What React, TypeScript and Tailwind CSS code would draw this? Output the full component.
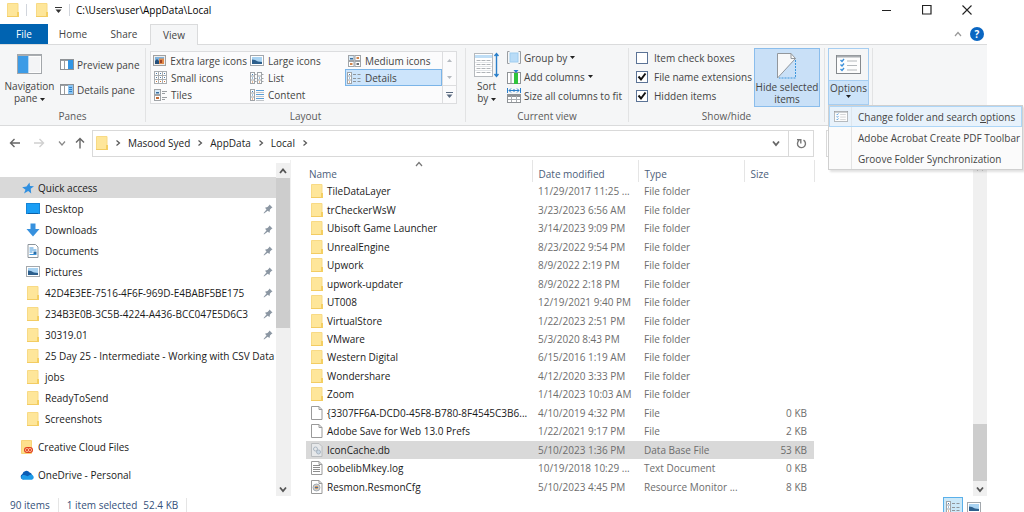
import { useState } from "react";
import type { ReactNode } from "react";

// ─── Types ────────────────────────────────────────────────
type FileKind = "folder" | "file" | "db" | "log" | "cfg";

interface FileRow {
  name: string;
  date: string;
  type: string;
  size?: string;
  kind: FileKind;
}

interface SideItem {
  label: string;
  icon: ReactNode;
  pinned?: boolean;
}

// ─── Icons ────────────────────────────────────────────────
function FolderIcon() {
  return (
    <svg width="12" height="14" viewBox="0 0 12 14" className="shrink-0">
      <path d="M.5.5h10.500v13H.5z" fill="#fee69a" stroke="#f8da85" />
      <path d="M10 9h2v5h-2z" fill="#f4cf62" />
      <path d="M0 13.500h11" stroke="#f3cc62" />
    </svg>
  );
}

function CreativeCloudIcon() {
  return (
    <svg width="14" height="14" viewBox="0 0 14 14" className="shrink-0">
      <path d="M1.500.5h10v13h-10z" fill="#fee08c" stroke="#f8d479" />
      <rect x="4" y="7" width="9" height="6" rx="3" fill="#e0411c" />
      <circle cx="7" cy="10" r="1.600" fill="none" stroke="#ffc9a8" strokeWidth=".8" />
      <circle cx="10" cy="10" r="1.600" fill="none" stroke="#ffc9a8" strokeWidth=".8" />
    </svg>
  );
}

function OneDriveIcon() {
  return (
    <svg width="14" height="10" viewBox="0 0 14 10" className="shrink-0">
      <path d="M3 9.500A2.900 2.900 0 0 1 2.400 4 4 4 0 0 1 9.600 2.600 3.200 3.200 0 0 1 12 5z" fill="#0a5cb5" />
      <path d="M3.200 9.700a2.400 2.400 0 0 1-.8-4.400c2-1 4 .2 5.200 1L10 4.800a2.500 2.500 0 0 1 2 4.900z" fill="#1e9be8" />
    </svg>
  );
}

function StarIcon() {
  return (
    <svg width="12" height="12" viewBox="0 0 12 12" className="shrink-0">
      <path d="M7.500.5 8 4l4 .3-3.300 2.500.5 4.700-3-2.500L2 11.500 3.500 7.700.2 5.300l4.300-.8z" fill="#2f8fe0" />
    </svg>
  );
}

function DesktopIcon() {
  return (
    <svg width="14" height="12" viewBox="0 0 14 12" className="shrink-0">
      <rect x=".5" y=".5" width="13" height="10" fill="#1a9ef5" stroke="#1484d6" />
      <path d="M2 10.500h10" stroke="#0b5fa5" />
    </svg>
  );
}

function DownloadIcon() {
  return (
    <svg width="14" height="14" viewBox="0 0 14 14" className="shrink-0">
      <path d="M4.500.5h5V6H13.500L7 13.500.500 6h4z" fill="#3791de" />
    </svg>
  );
}

function DocumentIcon() {
  return (
    <svg width="12" height="14" viewBox="0 0 12 14" className="shrink-0">
      <path d="M1 .5h7.500L11 3v10.500H1z" fill="#fff" stroke="#8d959c" />
      <path d="M2.500 4h4M2.500 6h7M2.500 8h3M2.500 10.500h7" stroke="#3f94d8" />
      <path d="M6.500 7.500h3V10h-3z" fill="#2a6ea8" />
    </svg>
  );
}

function PictureIcon() {
  return (
    <svg width="14" height="11" viewBox="0 0 14 11" className="shrink-0">
      <rect x=".5" y=".5" width="13" height="10" fill="#fff" stroke="#a3a8ad" />
      <rect x="2" y="2" width="10" height="7" fill="#a9d3f2" />
      <path d="M2 4.500l3 .5 3 1.500 4 .5v2H2z" fill="#2d5f8c" />
    </svg>
  );
}

function PinIcon() {
  return (
    <svg width="10" height="10" viewBox="0 0 10 10" className="shrink-0">
      <path d="M6.500.5 9.500 3.500 8.500 4 7 5.500 6.500 8 4.700 6.700 1 9.500.600 9 3.500 5.500 2 3.800 4.500 3 6 1.500z" fill="#8c97a3" />
    </svg>
  );
}

function FileIcon({ kind }: { kind: FileKind }) {
  if (kind === "folder") return <FolderIcon />;
  return (
    <svg width="12" height="14" viewBox="0 0 12 14" className="shrink-0">
      <path d="M.5.5H8L11 3.500v10H.5z" fill={kind === "db" ? "#e6e8ea" : "#fff"} stroke={kind === "db" ? "#b9bcbf" : "#9a9a9a"} />
      {kind !== "db" && <path d="M8 .5v3h3" fill="none" stroke="#9a9a9a" />}
      {kind === "log" && <path d="M2 4.500h7M2 6.500h7M2 8.500h7M2 10.500h7" stroke="#8d8d8d" />}
      {kind === "db" && (
        <g fill="none" stroke="#aab6c2">
          <circle cx="4.500" cy="6" r="2" />
          <circle cx="7.500" cy="9" r="2" fill="#c9d7e4" />
        </g>
      )}
      {kind === "cfg" && (
        <g>
          <circle cx="5.500" cy="7.500" r="3.500" fill="#cdd1d5" stroke="#979ea5" strokeWidth=".8" />
          <circle cx="5.500" cy="7.500" r="1.800" fill="#d99a5b" />
          <path d="M4 7.500h3" stroke="#4a6f9c" />
        </g>
      )}
    </svg>
  );
}

function NavPaneIcon() {
  return (
    <svg width="25" height="20" viewBox="0 0 25 20">
      <rect x=".5" y=".5" width="24" height="19" fill="#fdfdfd" stroke="#a3a7ab" />
      <path d="M1 1.500h23" stroke="#a9adb1" />
      <rect x="1" y="2" width="10" height="17" fill="#3c9be6" />
      <rect x="11" y="2" width="1" height="17" fill="#b5d8f5" />
      <rect x="12" y="3" width="11" height="15" fill="#f3f4f6" />
    </svg>
  );
}

function PaneIcon({ details }: { details?: boolean }) {
  return (
    <svg width="14" height="11" viewBox="0 0 14 11" className="shrink-0">
      <rect x=".5" y=".5" width="13" height="10" fill="#fff" stroke="#8e9296" />
      <path d="M1 1.500h12M4.500 1v9" stroke="#9a9ea2" />
      <rect x="8" y="1" width="5" height="9" fill={details ? "#8dc5f2" : "#3295e4"} />
      {details && <path d="M9 3.500h3M9 5.500h3M9 7.500h3" stroke="#2d82cc" />}
    </svg>
  );
}

function ExtraLargeIcon() {
  return (
    <svg width="13" height="11" viewBox="0 0 13 11" className="shrink-0">
      <rect x=".5" y=".5" width="12" height="10" fill="#eee" stroke="#a0a0a0" />
      <rect x="2" y="2" width="9" height="7" fill="#7fb2dc" />
      <path d="M2 6l2-2 2 2v3H2z" fill="#25507c" />
      <path d="M6 3.500h5V9H6z" fill="#e08a4a" />
      <path d="M7 5h2v3H7z" fill="#a04428" />
    </svg>
  );
}

function SmallIconsIcon() {
  return (
    <svg width="13" height="13" viewBox="0 0 13 13" className="shrink-0">
      {[0, 4, 8].map((y) =>
        [0, 4, 8].map((x) => (
          <g key={`${x}-${y}`}>
            <rect x={x + 0.5} y={y + 0.5} width="4" height="4" fill="#fff" stroke="#a9adb1" />
            <rect x={x + 2} y={y + 2} width="1" height="1" fill={y === 8 ? "#c9773f" : "#4b79a6"} />
          </g>
        ))
      )}
    </svg>
  );
}

function TilesIcon() {
  return (
    <svg width="13" height="12" viewBox="0 0 13 12" className="shrink-0">
      <rect x=".5" y=".5" width="6" height="5" fill="#d9ebf8" stroke="#a0a4a8" />
      <rect x=".5" y="6.500" width="6" height="5" fill="#fff" stroke="#a0a4a8" />
      <path d="M2 3h3v1.500H2z" fill="#3a6fa0" />
      <path d="M2 8h3v2H2z" fill="#c46a34" />
      <path d="M8 2.500h5M8 4.500h3M8 8.500h5M8 10.500h3" stroke="#9a9ea2" />
    </svg>
  );
}

function MediumIconsIcon() {
  return (
    <svg width="13" height="12" viewBox="0 0 13 12" className="shrink-0">
      <rect x=".5" y=".5" width="5.500" height="5" fill="#d9ebf8" stroke="#a0a4a8" />
      <rect x="7" y=".5" width="5.500" height="5" fill="#fff" stroke="#a0a4a8" />
      <rect x=".5" y="6.500" width="5.500" height="5" fill="#fff" stroke="#a0a4a8" />
      <rect x="7" y="6.500" width="5.500" height="5" fill="#fff" stroke="#a0a4a8" />
      <path d="M2 3h3v1.500H2z" fill="#3a6fa0" />
      <path d="M8.500 2h2.500v2H8.500zM2 8h2.500v2H2z" fill="#d2854c" />
      <path d="M8.500 8h2.500v2H8.500z" fill="#6c6f73" />
    </svg>
  );
}

// kind decides how the right-hand lines are drawn
function RowsIcon({ kind }: { kind: "list" | "details" | "content" }) {
  return (
    <svg width="14" height="12" viewBox="0 0 14 12" className="shrink-0">
      <rect x=".5" y=".5" width="4" height="11" fill="#fff" stroke="#a0a4a8" />
      <path d="M1 4h3M1 8h3" stroke="#a0a4a8" />
      <path d="M2 2h1v1H2zM2 5.500h1v1H2z" fill="#3f80bb" />
      <path d="M2 9.500h1v1H2z" fill="#d2732c" />
      {kind === "list" && (
        <g>
          <rect x="7.500" y=".5" width="4" height="11" fill="#fff" stroke="#a0a4a8" />
          <path d="M8 4h3M8 8h3M5 2.500h1.500M5 6.500h1.500M5 9.500h1.500M12 2.500h1.500M12 6.500h1.500M12 9.500h1.500" stroke="#a0a4a8" />
          <path d="M9 5.500h1v1H9z" fill="#3f80bb" />
          <path d="M9 9.500h1v1H9z" fill="#d2732c" />
        </g>
      )}
      {kind === "details" && <path d="M6 2.500h3M10.500 2.500h3M6 6.500h3M10.500 6.500h3M6 9.500h3M10.500 9.500h3" stroke="#8f959b" />}
      {kind === "content" && (
        <g>
          <path d="M6 1.500h8M6 5.500h8M6 9.500h8" stroke="#5a9fd8" />
          <path d="M6 3.500h8M6 7.500h8M6 11.500h8" stroke="#c0c4c8" />
        </g>
      )}
    </svg>
  );
}

function SortIcon() {
  return (
    <svg width="25" height="26" viewBox="0 0 25 26">
      <rect x=".5" y="1.500" width="18" height="23" fill="#fff" stroke="#b5b9bd" />
      <path d="M1 4.500h17" stroke="#bfdef6" strokeWidth="3" />
      <path d="M2.500 8.500h14M2.500 12.500h14M2.500 16.500h14M2.500 20.500h14" stroke="#b0b4b8" strokeDasharray="4 1" />
      <path d="M1 10.500h17M1 14.500h17M1 18.500h17" stroke="#e2e5e8" />
      <path d="M22.500 2v22M20.500 4l2-2.500 2 2.500M20.500 22l2 2.500 2-2.500" fill="none" stroke="#2a7fca" strokeWidth="1.400" />
    </svg>
  );
}

function GroupByIcon() {
  return (
    <svg width="14" height="13" viewBox="0 0 14 13" className="shrink-0">
      <path d="M2.500.5h-2v12h2M11.500.5h2v12h-2" fill="none" stroke="#9a9ea2" />
      <rect x="3" y="2" width="8" height="9" fill="#b9dcf7" stroke="#9fcdf0" />
    </svg>
  );
}

function AddColumnsIcon() {
  return (
    <svg width="14" height="14" viewBox="0 0 14 14" className="shrink-0">
      <rect x=".5" y="2.500" width="13" height="11" fill="#fff" stroke="#8e9296" />
      <path d="M4 3v10" stroke="#8e9296" />
      <rect x="7" y="3" width="4" height="11" fill="#2fc43c" />
      <path d="M6.500 0h5L9 3z" fill="#2a7fca" />
    </svg>
  );
}

function SizeColumnsIcon() {
  return (
    <svg width="14" height="15" viewBox="0 0 14 15" className="shrink-0">
      <path d="M.5 0v5M13.500 0v5M2 2.500h10M4 .5l-2 2 2 2M10 .5l2 2-2 2M7 1v3" fill="none" stroke="#2a7fca" />
      <rect x=".5" y="6.500" width="13" height="8" fill="#fff" stroke="#8e9296" />
      <path d="M1 8h12" stroke="#8e9296" strokeWidth="2" />
      <path d="M4.500 8v6M9.500 8v6M1 11.500h12" stroke="#a9adb1" />
    </svg>
  );
}

function HideItemsIcon() {
  return (
    <svg width="20" height="26" viewBox="0 0 20 26">
      <path d="M.5 25V.5H14L18.500 5z" fill="#f7f8f9" />
      <path d="M.5 25V.5H14L18.500 5.500.5 25M14 .5v5h4.500" fill="none" stroke="#92979c" />
      <path d="M18.500 7v18H2" fill="none" stroke="#3d97dd" strokeDasharray="2 1" />
    </svg>
  );
}

function OptionsIcon({ small }: { small?: boolean }) {
  return (
    <svg width={small ? 14 : 25} height={small ? 11 : 19} viewBox="0 0 25 19">
      <rect x=".5" y=".5" width="24" height="18" fill="#fdfdfd" stroke="#85898d" />
      <path d="M1 1.500h23" stroke="#a9adb1" strokeWidth="2" />
      <path d="M4.500 5l1.500 1.500 2-2.500M4.500 9.500l1.500 1.500 2-2.500M4.500 14l1.500 1.500 2-2.500" fill="none" stroke="#3c90da" strokeWidth="1.400" />
      <path d="M11 6h10M11 10.500h10M11 15h10" stroke="#b4b8bb" />
    </svg>
  );
}

function Caret() {
  return (
    <svg width="5" height="3" viewBox="0 0 5 3" className="inline-block shrink-0 align-middle">
      <path d="M0 0h5L2.500 3z" fill="#222" />
    </svg>
  );
}

function Chevron({ dir, color = "#555", bold }: { dir: "up" | "down" | "right"; color?: string; bold?: boolean }) {
  const d = { up: "M1 6l3-3.500L7 6", down: "M1 2.500 4 6l3-3.500", right: "M2.500 1.500 5.500 4l-3 2.500" }[dir];
  return (
    <svg width="8" height="8" viewBox="0 0 8 8" className="shrink-0">
      <path d={d} fill="none" stroke={color} strokeWidth={bold ? 1.8 : 1.2} />
    </svg>
  );
}

function ArrowIcon({ dir, color }: { dir: "left" | "right" | "up"; color: string }) {
  const d = {
    left: "M11 6H1.500M5.500 2l-4 4 4 4",
    right: "M1 6h9.500M6.500 2l4 4-4 4",
    up: "M6 11.500V1.500M2 5.500l4-4 4 4",
  }[dir];
  return (
    <svg width="12" height="12" viewBox="0 0 12 12">
      <path d={d} fill="none" stroke={color} strokeWidth="1.400" />
    </svg>
  );
}

// ─── Data ────────────────────────────────────────────────
const quickAccess: SideItem[] = [
  { label: "Desktop", icon: <DesktopIcon />, pinned: true },
  { label: "Downloads", icon: <DownloadIcon />, pinned: true },
  { label: "Documents", icon: <DocumentIcon />, pinned: true },
  { label: "Pictures", icon: <PictureIcon />, pinned: true },
  { label: "42D4E3EE-7516-4F6F-969D-E4BABF5BE175", icon: <FolderIcon />, pinned: true },
  { label: "234B3E0B-3C5B-4224-A436-BCC047E5D6C3", icon: <FolderIcon />, pinned: true },
  { label: "30319.01", icon: <FolderIcon />, pinned: true },
  { label: "25 Day 25 - Intermediate - Working with CSV Data", icon: <FolderIcon /> },
  { label: "jobs", icon: <FolderIcon /> },
  { label: "ReadyToSend", icon: <FolderIcon /> },
  { label: "Screenshots", icon: <FolderIcon /> },
];

const files: FileRow[] = [
  { name: "TileDataLayer", date: "11/29/2017 11:25 ...", type: "File folder", kind: "folder" },
  { name: "trCheckerWsW", date: "3/23/2023 6:56 AM", type: "File folder", kind: "folder" },
  { name: "Ubisoft Game Launcher", date: "3/14/2023 9:09 PM", type: "File folder", kind: "folder" },
  { name: "UnrealEngine", date: "8/23/2022 9:54 PM", type: "File folder", kind: "folder" },
  { name: "Upwork", date: "8/9/2022 2:19 PM", type: "File folder", kind: "folder" },
  { name: "upwork-updater", date: "8/9/2022 2:18 PM", type: "File folder", kind: "folder" },
  { name: "UT008", date: "12/19/2021 9:40 PM", type: "File folder", kind: "folder" },
  { name: "VirtualStore", date: "1/22/2023 2:51 PM", type: "File folder", kind: "folder" },
  { name: "VMware", date: "5/3/2020 8:43 PM", type: "File folder", kind: "folder" },
  { name: "Western Digital", date: "6/15/2016 1:19 AM", type: "File folder", kind: "folder" },
  { name: "Wondershare", date: "4/12/2020 3:33 PM", type: "File folder", kind: "folder" },
  { name: "Zoom", date: "1/14/2023 10:03 AM", type: "File folder", kind: "folder" },
  { name: "{3307FF6A-DCD0-45F8-B780-8F4545C3B6...", date: "4/10/2019 4:32 PM", type: "File", size: "0 KB", kind: "file" },
  { name: "Adobe Save for Web 13.0 Prefs", date: "1/22/2021 9:17 PM", type: "File", size: "2 KB", kind: "file" },
  { name: "IconCache.db", date: "5/10/2023 1:36 PM", type: "Data Base File", size: "53 KB", kind: "db" },
  { name: "oobelibMkey.log", date: "10/19/2018 10:29 ...", type: "Text Document", size: "0 KB", kind: "log" },
  { name: "Resmon.ResmonCfg", date: "5/10/2023 4:45 PM", type: "Resource Monitor ...", size: "8 KB", kind: "cfg" },
];

const layouts = [
  { label: "Extra large icons", icon: <ExtraLargeIcon /> },
  { label: "Large icons", icon: <PictureIcon /> },
  { label: "Medium icons", icon: <MediumIconsIcon /> },
  { label: "Small icons", icon: <SmallIconsIcon /> },
  { label: "List", icon: <RowsIcon kind="list" /> },
  { label: "Details", icon: <RowsIcon kind="details" /> },
  { label: "Tiles", icon: <TilesIcon /> },
  { label: "Content", icon: <RowsIcon kind="content" /> },
];

// ─── Components ────────────────────────────────────────────
function TitleBar() {
  return (
    <header className="flex h-6 items-start">
      <div className="flex h-5 flex-1 items-center pl-[7px]">
        <FolderIcon />
        <span className="ml-[7px] h-3 w-px bg-gray-300" />
        <span className="ml-[9px] flex items-center gap-[7px]">
          <FolderIcon />
          <svg width="7" height="6" viewBox="0 0 7 6">
            <path d="M0 .5h7" stroke="#333" />
            <path d="M.5 2.500h6L3.500 6z" fill="#333" />
          </svg>
        </span>
        <span className="ml-[7px] h-3 w-px bg-gray-300" />
        <h1 className="ml-1.5 text-black">C:\Users\user\AppData\Local</h1>
      </div>
      <button aria-label="Minimize" className="flex h-5 w-10 items-center justify-center">
        <svg width="10" height="10" viewBox="0 0 10 10"><path d="M0 5.500h9" stroke="#222" /></svg>
      </button>
      <button aria-label="Maximize" className="flex h-5 w-10 items-center justify-center">
        <svg width="10" height="10" viewBox="0 0 10 10"><path d="M.5.5h8.500V9H.5z" fill="none" stroke="#222" strokeWidth="1.200" /></svg>
      </button>
      <button aria-label="Close" className="flex h-5 w-10 items-center justify-center">
        <svg width="10" height="10" viewBox="0 0 10 10"><path d="M.5.500l9 9M9.500.5l-9 9" stroke="#222" strokeWidth="1.100" /></svg>
      </button>
    </header>
  );
}

function TabBar() {
  return (
    <nav className="flex h-5 text-[#444]">
      <button className="w-12 bg-[#0063b1] text-white">File</button>
      <button className="w-[50px]">Home</button>
      <button className="w-[52px]">Share</button>
      <button className="relative -mb-px w-12 border border-b-0 border-[#dadbdc] bg-[#f5f6f7]">View</button>
      <div className="ml-auto flex items-center gap-2 pr-[3px]">
        <button aria-label="Minimize the ribbon"><Chevron dir="up" color="#999" /></button>
        <button aria-label="Help" className="flex size-[14px] items-center justify-center rounded-full bg-[#0a66c2] font-bold text-white">?</button>
      </div>
    </nav>
  );
}

function RibbonGroup({ label, children }: { label?: string; children: ReactNode }) {
  return (
    <section className="flex flex-col justify-between border-r border-[#e2e3e4]">
      <div className="flex h-[60px]">{children}</div>
      {label && <h2 className="text-center leading-3 text-[#5a5a5a]">{label}</h2>}
    </section>
  );
}

function RibbonButton({ icon, label, caret }: { icon: ReactNode; label: string; caret?: boolean }) {
  return (
    <button className="flex h-[19px] items-center gap-[3px] whitespace-nowrap">
      {icon}
      {label}
      {caret && <Caret />}
    </button>
  );
}

function RibbonCheck({ label, defaultChecked }: { label: string; defaultChecked?: boolean }) {
  return (
    <label className="flex h-[19px] items-center gap-1.5 whitespace-nowrap">
      <span className="relative flex size-3">
        <input
          type="checkbox"
          defaultChecked={defaultChecked}
          className="peer size-3 appearance-none border border-[#5b7396] bg-white"
        />
        <svg viewBox="0 0 12 12" className="pointer-events-none absolute inset-0 hidden size-3 peer-checked:block">
          <path d="M2.500 5.500 5 8.500l4.500-6" fill="none" stroke="#111" strokeWidth="2" />
        </svg>
      </span>
      {label}
    </label>
  );
}

function OptionsMenu() {
  return (
    <ul role="menu" className="absolute left-0 top-full z-10 w-[195px] border border-[#d0d0d0] bg-[#fbfbfb] shadow-[2px_2px_2px_rgba(0,0,0,0.12)]">
      <li role="none">
        <button role="menuitem" className="flex h-[21px] w-full items-center border border-[#aed6f7] bg-[#e8f2fb] text-left whitespace-nowrap">
          <span className="flex h-full w-[22px] items-center justify-center border-r border-[#dde6ee]">
            <OptionsIcon small />
          </span>
          <span className="ml-1.5">Change folder and search <u>o</u>ptions</span>
        </button>
      </li>
      {["Adobe Acrobat Create PDF Toolbar", "Groove Folder Synchronization"].map((item) => (
        <li role="none" key={item}>
          <button role="menuitem" className="flex h-[21px] w-full items-center text-left whitespace-nowrap">
            <span className="h-full w-[23px] border-r border-[#e4e4e4]" />
            <span className="ml-1.5">{item}</span>
          </button>
        </li>
      ))}
    </ul>
  );
}

function Ribbon() {
  const [layout, setLayout] = useState("Details");
  const [menuOpen, setMenuOpen] = useState(true);

  return (
    <div className="flex h-[82px] border-y border-[#dadbdc] bg-[#f5f6f7] py-[3px] text-[#444]">
      <RibbonGroup label="Panes">
        <button className="mt-1.5 flex w-[59px] flex-col items-center leading-3">
          <NavPaneIcon />
          <span className="mt-1.5">Navigation<br />pane <Caret /></span>
        </button>
        <div className="flex w-[86px] flex-col gap-1.5 pl-px pt-[7px]">
          <RibbonButton icon={<PaneIcon />} label="Preview pane" />
          <RibbonButton icon={<PaneIcon details />} label="Details pane" />
        </div>
      </RibbonGroup>

      <RibbonGroup label="Layout">
        <div className="ml-1 mr-2 mt-[3px] flex h-[53px] border border-[#dcdddf] bg-[#fbfbfc]">
          <div className="grid grid-cols-[97px_97px_97px]">
            {layouts.map((l) => (
              <button
                key={l.label}
                onClick={() => setLayout(l.label)}
                className={`flex items-center gap-1 border pl-px whitespace-nowrap ${
                  layout === l.label ? "border-[#7ab4e8] bg-[#cce4fb]" : "border-transparent"
                }`}
              >
                <span className="flex w-[14px] justify-center">{l.icon}</span>
                {l.label}
              </button>
            ))}
          </div>
          <div className="flex w-[14px] flex-col border-l border-[#dcdddf]">
            {["Scroll up", "Scroll down"].map((name, i) => (
              <button key={name} aria-label={name} className="flex flex-1 items-center justify-center">
                <svg width="5" height="3" viewBox="0 0 5 3"><path d={i ? "M0 0h5L2.500 3z" : "M0 3h5L2.500 0z"} fill="#b5bac0" /></svg>
              </button>
            ))}
            <button aria-label="More layouts" className="flex flex-1 items-center justify-center border-t border-[#dcdddf]">
              <svg width="7" height="6" viewBox="0 0 7 6"><path d="M0 .5h7" stroke="#5a6a80" /><path d="M.5 2.500h6L3.500 6z" fill="#5a6a80" /></svg>
            </button>
          </div>
        </div>
      </RibbonGroup>

      <RibbonGroup label="Current view">
        <button className="mt-1 flex w-[41px] flex-col items-center leading-3">
          <SortIcon />
          <span className="mt-0.5">Sort<br />by <Caret /></span>
        </button>
        <div className="flex w-[121px] flex-col">
          <RibbonButton icon={<GroupByIcon />} label="Group by" caret />
          <RibbonButton icon={<AddColumnsIcon />} label="Add columns" caret />
          <RibbonButton icon={<SizeColumnsIcon />} label="Size all columns to fit" />
        </div>
      </RibbonGroup>

      <RibbonGroup label="Show/hide">
        <div className="flex w-[125px] flex-col pl-[7px]">
          <RibbonCheck label="Item check boxes" />
          <RibbonCheck label="File name extensions" defaultChecked />
          <RibbonCheck label="Hidden items" defaultChecked />
        </div>
        <button className="mr-1 flex h-[59px] w-[66px] flex-col items-center border border-[#8abdec] bg-[#c9e0f7] pt-1 leading-3">
          <HideItemsIcon />
          <span className="mt-0.5">Hide selected<br />items</span>
        </button>
      </RibbonGroup>

      <RibbonGroup>
        <div className="relative mx-[3px] h-[57px]">
          <button
            aria-haspopup="menu"
            aria-expanded={menuOpen}
            onClick={() => setMenuOpen(!menuOpen)}
            className="flex h-full w-[41px] flex-col border border-[#a5cdf1]"
          >
            <span className="flex w-full flex-1 items-center justify-center">
              <OptionsIcon />
            </span>
            <span className="flex h-6 w-full flex-col items-center border-t border-[#a5cdf1] bg-[#cce3f9] leading-[14px]">
              Options
              <Caret />
            </span>
          </button>
          {menuOpen && <OptionsMenu />}
        </div>
      </RibbonGroup>
    </div>
  );
}

function AddressBar() {
  return (
    <div className="flex h-[34px] items-center text-[#222]">
      <div className="flex w-[92px] items-center justify-between pl-[9px] pr-1.5">
        <button aria-label="Back"><ArrowIcon dir="left" color="#666" /></button>
        <button aria-label="Forward" className="ml-1"><ArrowIcon dir="right" color="#d0d0d0" /></button>
        <button aria-label="Recent locations" className="ml-1"><Chevron dir="down" color="#888" /></button>
        <button aria-label="Up"><ArrowIcon dir="up" color="#666" /></button>
      </div>
      <div className="flex h-[27px] flex-1 items-center border border-[#d9d9d9] pl-[3px]">
        <FolderIcon />
        {["Masood Syed", "AppData", "Local"].map((part) => (
          <button key={part} className="flex items-center whitespace-nowrap">
            <span className="mx-[6px]"><Chevron dir="right" /></span>
            {part}
          </button>
        ))}
        <span className="mx-[6px]"><Chevron dir="right" /></span>
        <button aria-label="Previous locations" className="ml-auto mr-2"><Chevron dir="down" color="#666" bold /></button>
        <button aria-label="Refresh" className="flex h-full w-[25px] items-center justify-center border-l border-[#d9d9d9]">
          <svg width="11" height="11" viewBox="0 0 11 11">
            <path d="M7.500 2.200a4 4 0 1 1-4.500.300M1 1.800h3.800v3.700" fill="none" stroke="#777" strokeWidth="1.400" />
          </svg>
        </button>
      </div>
      <input type="search" aria-label="Search Local" className="ml-3 h-[27px] w-[161px] border border-[#d9d9d9] outline-none" />
    </div>
  );
}

function Scrollbar({ children }: { children: ReactNode }) {
  return (
    <div className="flex w-[14px] shrink-0 flex-col bg-[#f0f0f0]">
      <div className="flex h-[15px] shrink-0 items-center justify-center"><Chevron dir="up" bold /></div>
      {children}
      <div className="flex h-[15px] shrink-0 items-center justify-center"><Chevron dir="down" bold /></div>
    </div>
  );
}

function Sidebar() {
  return (
    <aside className="flex w-[291px] shrink-0 border-r border-[#f0f0f0] pt-[3px]">
      <nav className="min-w-0 flex-1 overflow-hidden pt-[14px] text-[#1a1a1a]">
        <button className="flex h-[21px] w-full items-center gap-1 bg-[#d9d9d9] pl-[22px]">
          <StarIcon />
          Quick access
        </button>
        <ul>
          {quickAccess.map((item) => (
            <li key={item.label}>
              <button className="flex h-[21px] w-full items-center gap-[5px] pl-[26px] pr-[3px] text-left whitespace-nowrap">
                <span className="flex w-[14px] shrink-0 justify-center">{item.icon}</span>
                <span className="flex-1">{item.label}</span>
                {item.pinned && <PinIcon />}
              </button>
            </li>
          ))}
        </ul>
        <button className="mt-[7px] flex h-[21px] items-center gap-1 pl-5"><CreativeCloudIcon />Creative Cloud Files</button>
        <button className="mt-[7px] flex h-[21px] items-center gap-1 pl-5"><OneDriveIcon />OneDrive - Personal</button>
      </nav>
      <Scrollbar>
        <div className="h-[150px] bg-[#cdcdcd]" />
        <div className="flex-1" />
      </Scrollbar>
    </aside>
  );
}

function FileTable() {
  return (
    <table className="ml-[15px] h-full w-[508px] table-fixed border-collapse text-left whitespace-nowrap text-[#6d6d6d]">
      <colgroup>
        <col className="w-[226px]" />
        <col className="w-[106px]" />
        <col className="w-[106px]" />
        <col className="w-[70px]" />
      </colgroup>
      <thead>
        <tr className="h-[22px] text-[#4c607a]">
          <th className="relative border-r border-[#e5e5e5] pl-[3px] pt-1.5 font-normal">
            Name
            <span className="absolute left-1/2 top-0 -translate-x-1/2"><Chevron dir="up" color="#777" /></span>
          </th>
          <th className="border-r border-[#e5e5e5] pl-[6px] pt-1.5 font-normal">Date modified</th>
          <th className="border-r border-[#e5e5e5] pl-[6px] pt-1.5 font-normal">Type</th>
          <th className="border-r border-[#e5e5e5] pl-[6px] pt-1.5 font-normal">Size</th>
        </tr>
      </thead>
      <tbody>
        {files.map((f) => (
          <tr key={f.name} className={f.kind === "db" ? "bg-[#d9d9d9]" : ""}>
            <td className="p-0 pl-[5px] text-[#1a1a1a]">
              <span className="flex items-center gap-1">
                <FileIcon kind={f.kind} />
                {f.name}
              </span>
            </td>
            <td className="p-0 pl-[6px]">{f.date}</td>
            <td className="p-0 pl-[6px]">{f.type}</td>
            <td className="p-0 pr-[7px] text-right">{f.size}</td>
          </tr>
        ))}
      </tbody>
    </table>
  );
}

function StatusBar() {
  return (
    <footer className="flex h-4 shrink-0 items-end pl-2.5 leading-[14px] text-[#34507a]">
      <span className="border-r border-[#e5e5e5] pr-2">90 items</span>
      <span className="flex gap-1.5 border-r border-[#e5e5e5] px-2">
        <span>1 item selected</span>
        <span>52.4 KB</span>
      </span>
      <div className="ml-auto flex h-[15px] items-start gap-1 overflow-hidden pr-1.5">
        <button aria-label="Details view" className="flex h-5 w-5 items-center justify-center border border-[#5ab0ea] bg-[#cbe8f8]">
          <RowsIcon kind="details" />
        </button>
        <button aria-label="Large icons view" className="flex h-5 items-center"><PictureIcon /></button>
      </div>
    </footer>
  );
}

export default function App() {
  return (
    <div className="h-screen overflow-hidden bg-white font-['Open_Sans',sans-serif] text-[10px] leading-[14px]">
      <div className="mr-[37px] flex h-full flex-col">
        <TitleBar />
        <TabBar />
        <Ribbon />
        <AddressBar />
        <main className="flex min-h-0 flex-1">
          <Sidebar />
          <FileTable />
          <div className="ml-auto flex">
            <Scrollbar>
              <div className="flex-1" />
              <div className="h-[57px] bg-[#cdcdcd]" />
            </Scrollbar>
          </div>
        </main>
        <StatusBar />
      </div>
    </div>
  );
}
